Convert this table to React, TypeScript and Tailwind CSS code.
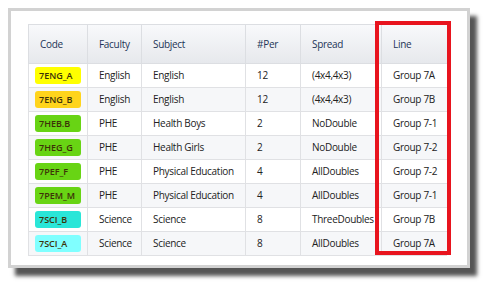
import React from 'react';

type Row = {
  code: string;
  color: string;
  faculty: string;
  subject: string;
  per: number;
  spread: string;
  line: string;
};

const rows: Row[] = [
  { code: '7ENG_A', color: 'bg-[#ffff00]', faculty: 'English', subject: 'English', per: 12, spread: '(4x4,4x3)', line: 'Group 7A' },
  { code: '7ENG_B', color: 'bg-[#ffd41c]', faculty: 'English', subject: 'English', per: 12, spread: '(4x4,4x3)', line: 'Group 7B' },
  { code: '7HEB.B', color: 'bg-[#68d414]', faculty: 'PHE', subject: 'Health Boys', per: 2, spread: 'NoDouble', line: 'Group 7-1' },
  { code: '7HEG_G', color: 'bg-[#68d414]', faculty: 'PHE', subject: 'Health Girls', per: 2, spread: 'NoDouble', line: 'Group 7-2' },
  { code: '7PEF_F', color: 'bg-[#68d414]', faculty: 'PHE', subject: 'Physical Education', per: 4, spread: 'AllDoubles', line: 'Group 7-2' },
  { code: '7PEM_M', color: 'bg-[#68d414]', faculty: 'PHE', subject: 'Physical Education', per: 4, spread: 'AllDoubles', line: 'Group 7-1' },
  { code: '7SCI_B', color: 'bg-[#2ae6d8]', faculty: 'Science', subject: 'Science', per: 8, spread: 'ThreeDoubles', line: 'Group 7B' },
  { code: '7SCI_A', color: 'bg-[#80ffff]', faculty: 'Science', subject: 'Science', per: 8, spread: 'AllDoubles', line: 'Group 7A' },
];

const headers = ['Code', 'Faculty', 'Subject', '#Per', 'Spread', 'Line'];
const widths = ['w-[59px]', 'w-[54px]', 'w-[104px]', 'w-[55px]', 'w-[81px]', 'w-[66px]'];

export default function App() {
  return (
    <div className="w-[484px] h-[283px] bg-white pt-2 pl-2 font-['Open_Sans',sans-serif]">
      <div className="relative w-[462px] h-[260px] bg-white border-[3px] border-[#d2d2d2] shadow-[7px_8px_4px_#555] pl-[17px] pt-[13px]">
        <div className="w-[419px] h-[232px] overflow-hidden">
          <table className="table-fixed border-collapse w-[419px] text-[10px] tracking-[-0.3px] text-[#222]">
            <colgroup>
              {widths.map((w, i) => (
                <col key={i} className={w} />
              ))}
            </colgroup>
            <thead>
              <tr className="h-[39px] bg-gradient-to-b from-[#f8f9fb] to-[#e6e8ec] shadow-[0_1px_2px_rgba(0,0,0,0.12)]">
                {headers.map((h) => (
                  <th key={h} className="text-left font-normal text-[#1d3557] pl-[11px] border border-[#dcdee2]">
                    {h}
                  </th>
                ))}
              </tr>
            </thead>
            <tbody>
              {rows.map((r, i) => (
                <tr key={r.code} className={`h-[24px] ${i % 2 === 1 ? 'bg-[#f6f7f9]' : 'bg-white'}`}>
                  <td className="border border-[#e0e1e4] pl-[6px] pr-[6px]">
                    <span className={`block ${r.color} rounded-[3px] h-[17px] leading-[17px] pl-1 text-[9px] font-semibold tracking-normal text-[#3d3208]`}>
                      {r.code}
                    </span>
                  </td>
                  <td className="border border-[#e0e1e4] pl-[11px]">{r.faculty}</td>
                  <td className="border border-[#e0e1e4] pl-[11px] whitespace-nowrap">{r.subject}</td>
                  <td className="border border-[#e0e1e4] pl-[11px]">{r.per}</td>
                  <td className="border border-[#e0e1e4] pl-[11px] whitespace-nowrap">{r.spread}</td>
                  <td className="border border-[#e0e1e4] pl-[11px]">{r.line}</td>
                </tr>
              ))}
              <tr className="h-[24px]">
                {headers.map((h) => (
                  <td key={h} className="border border-[#e0e1e4]" />
                ))}
              </tr>
            </tbody>
          </table>
        </div>
        <div className="absolute left-[364px] top-[10px] w-[76px] h-[234px] border-4 border-[#e8141e]" />
      </div>
    </div>
  );
}
